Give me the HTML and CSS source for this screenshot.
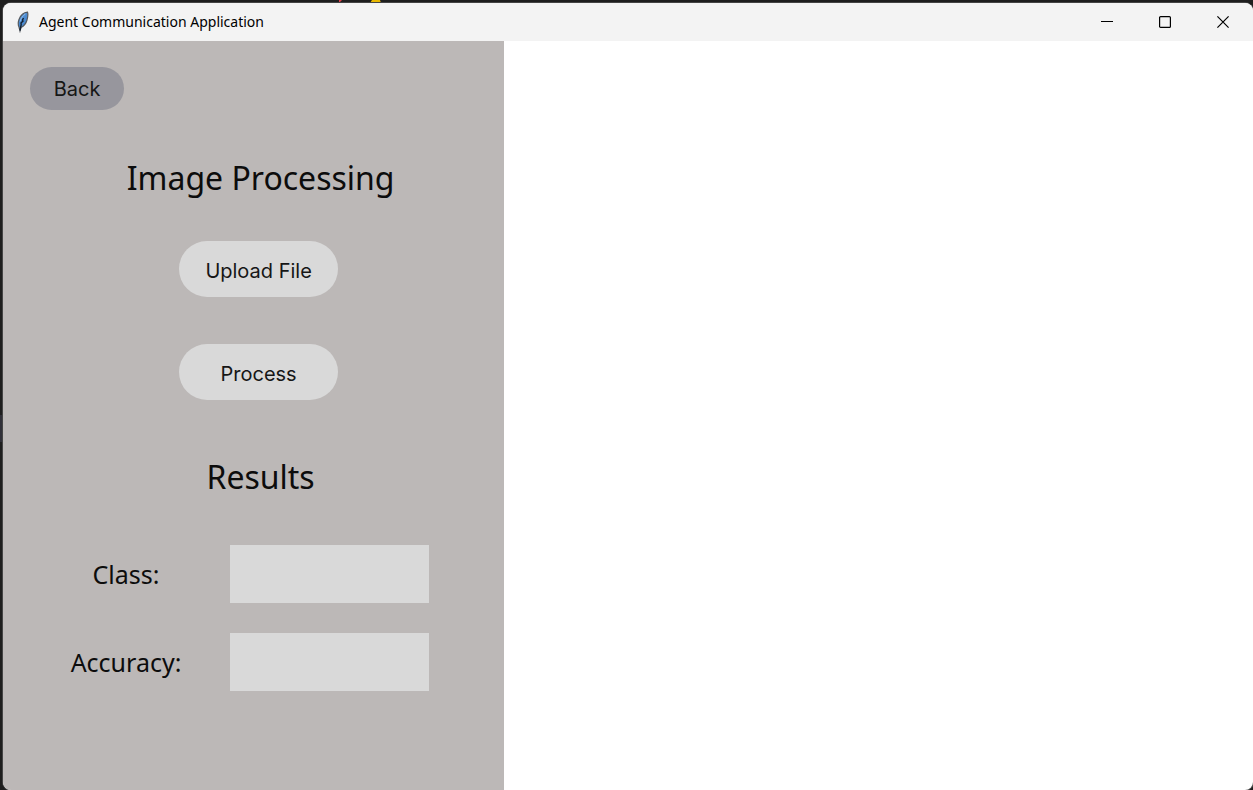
FILE: index.html
```html
<!DOCTYPE html>
<html lang="en">
<head>
<meta charset="utf-8">
<title>Agent Communication Application</title>
<link rel="stylesheet" href="styles.css">
</head>
<body>
<svg class="backdrop-marks" width="60" height="3" viewBox="0 0 60 3" aria-hidden="true">
  <path d="M9 0h3l-1 1-1 1H9z" fill="#e0404a"/>
  <path d="M42 0h8l1 3H40z" fill="#e8b800"/>
</svg>
<div class="backdrop-tab"></div>
<div class="window">
  <header class="titlebar">
    <svg class="feather" width="16" height="22" viewBox="0 0 16 22" aria-hidden="true">
      <path d="M12.500 1.200C9 1.500 5.500 4.500 4 8.500c-1 3-1 5.500 0 7.500l1 4 1-3.500c3-1.500 5-4 6-7.500.8-3 1.200-6 .5-7.800z" fill="#4a8ad0" stroke="#55595e" stroke-width="1.200"/>
      <path d="M8.500 7l-1 2 .5 1-2 2 .2 1.500L5 19.500" fill="none" stroke="#14202e" stroke-width="1.400"/>
      <path d="M10.500 3C8 4.500 6 7 5 10.500" fill="none" stroke="#8fbbe8" stroke-width="1"/>
    </svg>
    <h1 class="title">Agent Communication Application</h1>
    <div class="controls">
      <button class="control" type="button" aria-label="Minimize"><svg width="12" height="12" viewBox="0 0 12 12"><path d="M0 5.500h12"/></svg></button>
      <button class="control" type="button" aria-label="Maximize"><svg width="12" height="12" viewBox="0 0 12 12"><rect x=".6" y=".6" width="10.800" height="10.800" rx="1"/></svg></button>
      <button class="control" type="button" aria-label="Close"><svg width="12" height="12" viewBox="0 0 12 12"><path d="M.4.4l11.200 11.200M11.600.4L.4 11.600"/></svg></button>
    </div>
  </header>
  <main class="content">
    <section class="panel">
      <button class="pill back" type="button">Back</button>
      <h2 class="heading">Image Processing</h2>
      <div class="actions">
        <button class="pill action" type="button">Upload File</button>
        <button class="pill action" type="button">Process</button>
      </div>
      <h2 class="heading">Results</h2>
      <form class="results">
        <label class="label" for="class">Class:</label>
        <input class="field" id="class" type="text" readonly>
        <label class="label" for="accuracy">Accuracy:</label>
        <input class="field" id="accuracy" type="text" readonly>
      </form>
    </section>
    <section class="canvas" aria-label="Image preview"></section>
  </main>
</div>
</body>
</html>
```
FILE: styles.css
```css
* {
  box-sizing: border-box;
}

body {
  margin: 0;
  min-height: 100vh;
  display: flex;
  padding: 3px 0 0 3px;
  background: #1e1e1e;
  font-family: "Noto Sans", sans-serif;
  color: #0c0c0c;
}

.backdrop-marks {
  position: absolute;
  top: 0;
  left: 330px;
}

.backdrop-tab {
  position: absolute;
  top: 415px;
  left: 0;
  width: 2px;
  height: 27px;
  background: #303038;
}

.window {
  position: relative;
  flex: 1;
  display: flex;
  flex-direction: column;
  overflow: hidden;
  border-radius: 8px;
  background: #fff;
  box-shadow: 0 0 0 1px #444;
}

.titlebar {
  display: flex;
  align-items: center;
  height: 38px;
  padding: 0 1px 0 12px;
  background: #f3f3f3;
}

.feather {
  margin-right: 8px;
}

.title {
  flex: 1;
  margin: 0;
  font: 400 14px/20px "Noto Sans", sans-serif;
  color: #000;
}

.controls {
  display: flex;
  height: 100%;
}

.control {
  display: flex;
  align-items: center;
  justify-content: center;
  width: 58px;
  padding: 0;
  border: 0;
  background: none;
}

.control svg {
  fill: none;
  stroke: #000;
  stroke-width: 1.2;
}

.content {
  flex: 1;
  display: flex;
}

.panel {
  display: flex;
  flex-direction: column;
  align-items: center;
  width: 40vw;
  padding: 26px 0 96px 10px;
  background: #bcb8b7;
}

.canvas {
  flex: 1;
}

.pill {
  border: 0;
  border-radius: 28px;
  background: #d9d9d9;
  font: 400 20px/24px Inter, sans-serif;
  color: #161616;
}

.back {
  align-self: flex-start;
  width: 94px;
  height: 43px;
  margin-left: 17px;
  background: #97969d;
}

.heading {
  margin: 44px 0 39px;
  padding-left: 4px;
  font-size: 32px;
  font-weight: 400;
  line-height: 48px;
}

.actions {
  display: grid;
  gap: 47px;
  margin-bottom: 9px;
}

.action {
  width: 159px;
  height: 56px;
  padding: 4px 6px 0;
}

.results {
  display: grid;
  grid-template-columns: 160px 199px;
  align-items: center;
  gap: 30px 24px;
  align-self: flex-start;
  margin: 5px 0 0 33px;
}

.label {
  font-size: 25px;
  line-height: 36px;
  text-align: center;
}

.field {
  width: 100%;
  height: 58px;
  padding: 0 12px;
  border: 0;
  background: #d9d9d9;
  font: 400 20px/24px Inter, sans-serif;
}
```
